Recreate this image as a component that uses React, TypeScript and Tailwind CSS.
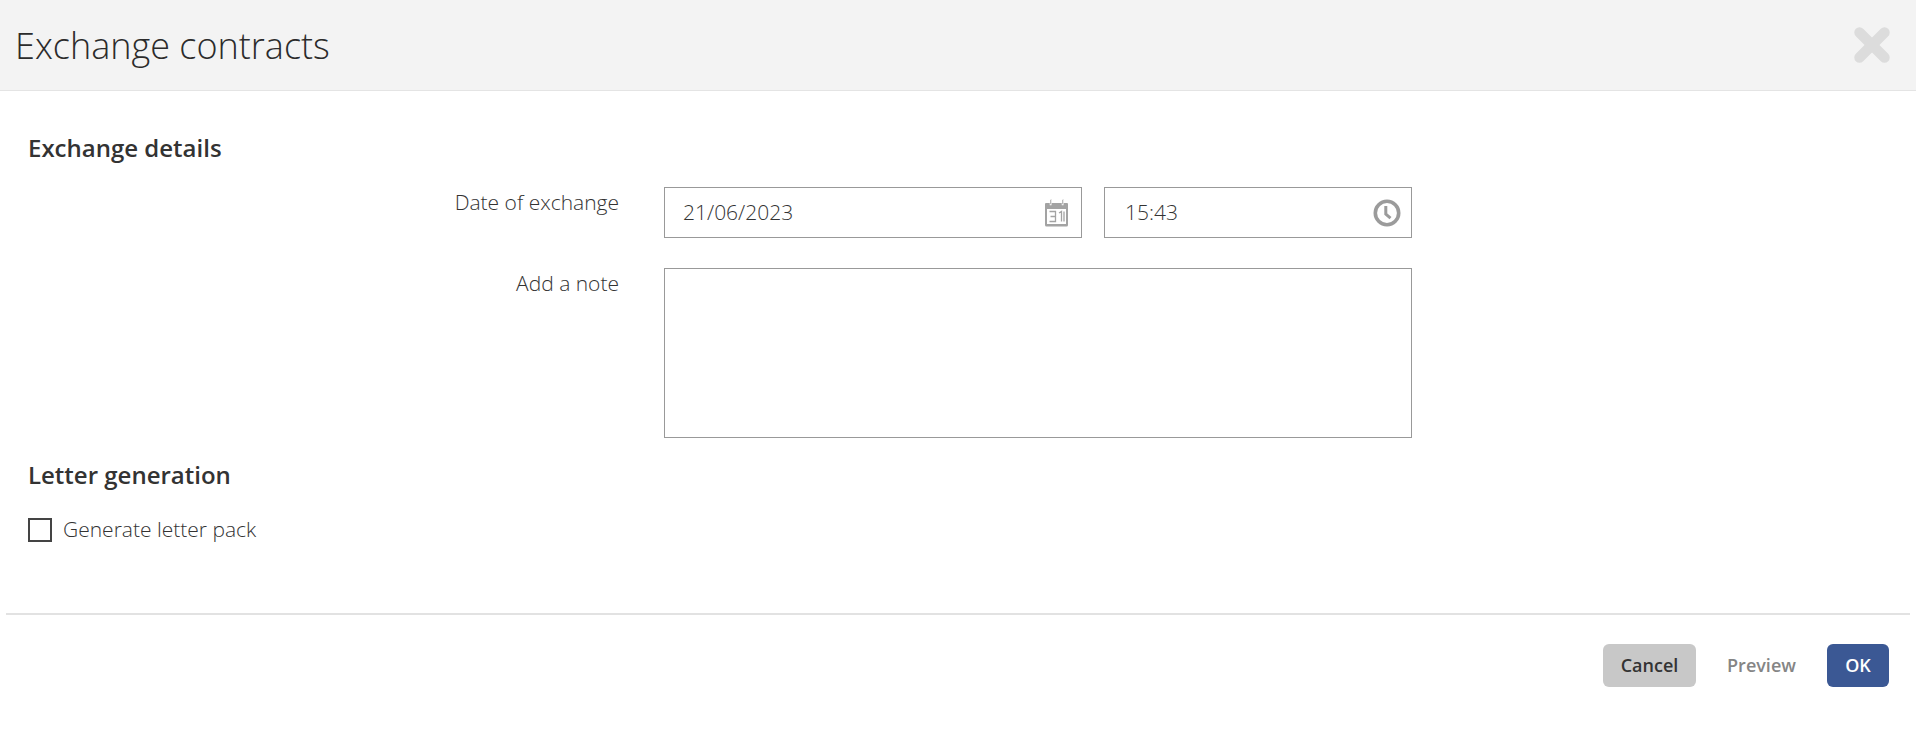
import { X } from "lucide-react";

function CalendarIcon() {
  return (
    <svg width="24" height="28" viewBox="0 0 24 28" className="text-[#a3a3a3]">
      <path d="M1 4h21a1 1 0 0 1 1 1v21a1.500 1.500 0 0 1-1.500 1.500h-20A1.500 1.500 0 0 1 0 26V5a1 1 0 0 1 1-1z" fill="currentColor" />
      <rect x="2" y="10" width="19" height="15" fill="#fff" />
      <rect x="5" y="0" width="1.500" height="6" fill="currentColor" stroke="#fff" strokeWidth="0.500" />
      <rect x="17" y="0" width="1.500" height="6" fill="currentColor" stroke="#fff" strokeWidth="0.500" />
      <path d="M4.500 12.500h6v10h-6M5.500 17.500h5M14 14l2.500-1.500v10M19 12.500v10" fill="none" stroke="currentColor" strokeWidth="1.300" />
    </svg>
  );
}

function ClockIcon() {
  return (
    <svg width="28" height="28" viewBox="0 0 28 28" className="text-[#9b9b9b]">
      <circle cx="14" cy="14" r="11.700" fill="none" stroke="currentColor" strokeWidth="3.600" />
      <path d="M12.800 7v8l4.700 4.200" fill="none" stroke="currentColor" strokeWidth="3" />
    </svg>
  );
}

export default function App() {
  return (
    <div className="h-[732px] bg-white font-['Open_Sans',sans-serif] text-[#333] antialiased">
      {/* Header */}
      <div className="flex h-[91px] items-center justify-between border-b border-[#e4e4e4] bg-[#f3f3f3] pl-[15px] pr-[19px]">
        <h1 className="pt-[2px] text-[36px] font-light leading-none text-[#2b2b2b]">Exchange contracts</h1>
        <X size={50} strokeWidth={5} className="text-[#dcdcdc]" />
      </div>

      {/* Body */}
      <div className="h-[522px] pl-7 pr-7 pt-[42px]">
        <h2 className="text-[24px] font-semibold leading-[30px]">Exchange details</h2>

        <div className="mt-[24px] flex">
          <label className="w-[591px] pt-[2px] text-right text-[21px] font-light leading-[27px]">Date of exchange</label>
          <div className="ml-[45px] flex gap-[22px]">
            <div className="flex h-[51px] w-[418px] items-center justify-between border border-[#999] pl-[18px] pr-3">
              <span className="text-[21px] font-light">21/06/2023</span>
              <CalendarIcon />
            </div>
            <div className="flex h-[51px] w-[308px] items-center justify-between border border-[#999] pl-[20px] pr-[10px]">
              <span className="text-[21px] font-light">15:43</span>
              <ClockIcon />
            </div>
          </div>
        </div>

        <div className="mt-[30px] flex">
          <label className="w-[591px] pt-[2px] text-right text-[21px] font-light leading-[27px]">Add a note</label>
          <textarea className="ml-[45px] h-[170px] w-[748px] resize-none border border-[#999] outline-none" />
        </div>

        <h2 className="mt-[22px] text-[24px] font-semibold leading-[30px]">Letter generation</h2>

        <label className="mt-[26px] flex items-center">
          <span className="h-6 w-6 border-2 border-[#444]" />
          <span className="ml-[11px] text-[21px] font-light leading-[27px]">Generate letter pack</span>
        </label>
      </div>

      {/* Footer */}
      <div className="mx-[6px] flex justify-end border-t-2 border-[#e2e2e2] pr-[21px] pt-[29px]">
        <button className="h-[43px] w-[93px] rounded-md bg-[#c8c8c8] text-[18px] font-semibold">Cancel</button>
        <button className="h-[43px] w-[131px] text-[18px] font-semibold text-[#858585]">Preview</button>
        <button className="h-[43px] w-[62px] rounded-md bg-[#3b5894] text-[18px] font-semibold text-white">OK</button>
      </div>
    </div>
  );
}
